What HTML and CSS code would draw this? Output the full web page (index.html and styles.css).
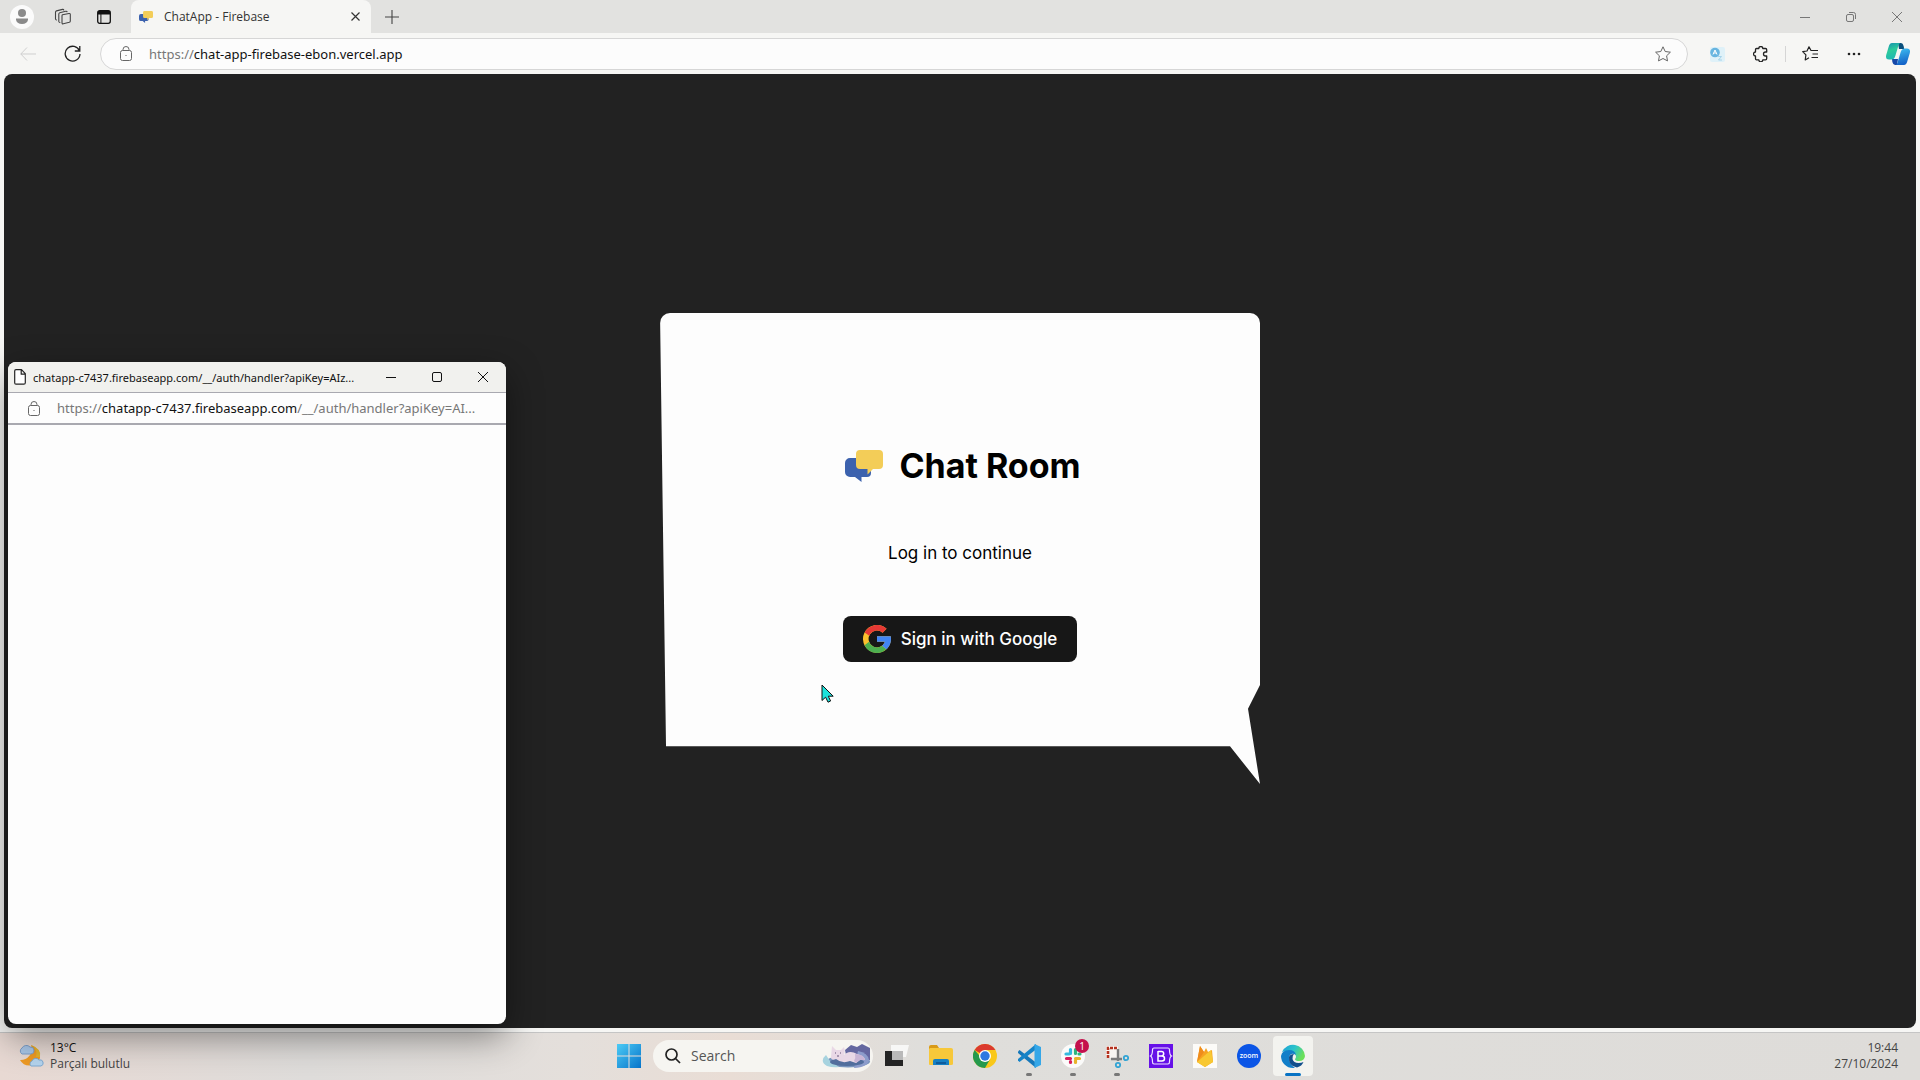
FILE: index.html
```html
<!DOCTYPE html>
<html lang="en">
<head>
<meta charset="utf-8">
<title>ChatApp - Firebase</title>
<link rel="stylesheet" href="styles.css">
</head>
<body>
<div class="desktop">
  <div class="browser">
    <header class="tabstrip">
      <div class="strip-tools">
        <button class="icon-btn avatar" aria-label="Profile"><svg width="24" height="24" viewBox="0 0 24 24"><circle cx="12" cy="12" r="12" fill="#fbfbfb"/><circle cx="12" cy="8" r="4" fill="#8a8a8a"/><path d="M6 13.500h12v1a6 4.500 0 0 1-12 0z" fill="#8a8a8a"/></svg></button>
        <button class="icon-btn" aria-label="Workspaces"><svg width="18" height="18" viewBox="0 0 18 18" fill="none" stroke="#444" stroke-width="1.100" stroke-linejoin="round"><path d="M8.500 6.800l6.500-1.300q1.300-.2 1.300 1V13q0 1-1 1.300l-6 1.500q-1.300.3-1.300-1V8q0-1 .5-1.200zM4.800 13.500V6q0-1 1-1.300l6-1.400q1.200-.2 1.400.9M4.800 13.500q.2 1.200 1.500 1M1.500 11V4.200q0-1 1-1.300l6-1.500q1.200-.2 1.400.9M1.500 11q.2 1.200 1.500 1"/></svg></button>
        <button class="icon-btn" aria-label="Tab actions"><svg width="14" height="14" viewBox="0 0 14 14"><rect x=".7" y=".7" width="12.600" height="12.600" rx="2" fill="none" stroke="#111" stroke-width="1.300"/><path d="M1 1h12v3.500H1zM3.400 4.500h1V13h-1z" fill="#111"/></svg></button>
      </div>
      <div class="tab">
        <svg class="tab-logo" width="14" height="12" viewBox="0 0 38 32"><use href="#chat-logo"/></svg>
        <span class="tab-title">ChatApp - Firebase</span>
        <button class="icon-btn small" aria-label="Close tab"><svg width="9" height="9" viewBox="0 0 9 9" stroke="#333" stroke-width="1.200"><path d="M.5.5l8 8M8.500.5l-8 8"/></svg></button>
      </div>
      <button class="icon-btn new-tab" aria-label="New tab"><svg width="14" height="14" viewBox="0 0 14 14" stroke="#444" stroke-width="1.100"><path d="M7 0v14M0 7h14"/></svg></button>
      <div class="window-tools">
        <button class="icon-btn" aria-label="Minimize"><svg width="10" height="10" viewBox="0 0 10 10" stroke="#777" fill="none"><path d="M0 5.500h10"/></svg></button>
        <button class="icon-btn" aria-label="Restore"><svg width="10" height="10" viewBox="0 0 10 10" stroke="#777" fill="none"><rect x=".5" y="2.500" width="7" height="7" rx="1.500"/><path d="M3 .5h4.500a2 2 0 0 1 2 2V7"/></svg></button>
        <button class="icon-btn" aria-label="Close"><svg width="10" height="10" viewBox="0 0 10 10" stroke="#777" fill="none"><path d="M0 0l10 10M10 0L0 10"/></svg></button>
      </div>
    </header>

    <div class="toolbar">
      <button class="icon-btn back" aria-label="Back"><svg width="16" height="14" viewBox="0 0 16 14" stroke="#cfcfcf" fill="none"><path d="M7 .5L.8 7 7 13.500M.8 7H16"/></svg></button>
      <button class="icon-btn" aria-label="Refresh"><svg width="17" height="17" viewBox="0 0 17 17" stroke="#222" stroke-width="1.300" fill="none"><path d="M15.500 6A7.400 7.400 0 1 0 16 9M15.800 1v5h-5"/></svg></button>
      <div class="address">
        <svg width="12" height="15" viewBox="0 0 12 15" stroke="#666" fill="none"><use href="#lock"/></svg>
        <p class="url"><span class="dim">https://</span>chat-app-firebase-ebon.vercel.app</p>
        <button class="icon-btn" aria-label="Favourite this page"><svg width="16" height="16" viewBox="0 0 16 16" stroke="#666" fill="none" stroke-linejoin="round"><path d="M8 .8l2.200 4.700 5.200.7-3.800 3.600.9 5.100L8 12.500l-4.500 2.400.9-5.100L.6 6.200l5.200-.7z"/></svg></button>
      </div>
      <div class="toolbar-tools">
        <button class="icon-btn" aria-label="Translate"><svg width="16" height="16" viewBox="0 0 16 16"><rect x="1" y="1" width="15" height="15" rx="2" fill="#dff1f8"/><circle cx="6" cy="6.500" r="4.800" fill="#68b5e0"/><path d="M4 8.500L6 4l2 4.500M4.700 7h2.600" stroke="#fff" fill="none"/><path d="M9 10.500h3.500L9.500 14H13" stroke="#a5d3ea" fill="none"/></svg></button>
        <button class="icon-btn" aria-label="Extensions"><svg width="16" height="16" viewBox="0 0 16 16" fill="none" stroke="#222" stroke-width="1.300" stroke-linejoin="round"><path d="M3.500 2.500h2.300a2 2 0 0 1 4 0h2.700q1.200 0 1.200 1.200v2.300h-1.200a2 2 0 0 0 0 4h1.200v2.600q0 1.200-1.200 1.200H9.800a2 2 0 0 1-4 0H3.500q-1 0-1-1V10a2 2 0 0 1 0-4V3.500q0-1 1-1z"/></svg></button>
        <span class="divider"></span>
        <button class="icon-btn" aria-label="Favourites"><svg width="16" height="15" viewBox="0 0 16 15" fill="none" stroke="#222" stroke-width="1.200" stroke-linejoin="round"><path d="M10 4.500H9L7 .8 5 5 .7 5.700l3.200 3.200L3.200 14 7 11.800M9.500 4.500H16M10.500 8H16M9.500 11.500H16"/></svg></button>
        <button class="icon-btn" aria-label="Settings and more"><svg width="14" height="4" viewBox="0 0 14 4" fill="#222"><circle cx="2" cy="2" r="1.300"/><circle cx="7" cy="2" r="1.300"/><circle cx="12" cy="2" r="1.300"/></svg></button>
        <button class="icon-btn" aria-label="Copilot"><svg width="24" height="22" viewBox="0 0 24 22"><defs><linearGradient id="cp1" x2=".3" y2="1"><stop stop-color="#168fb0"/><stop offset=".5" stop-color="#2ccb9b"/><stop offset="1" stop-color="#21b8b2"/></linearGradient><linearGradient id="cp2" x2=".2" y2="1"><stop stop-color="#3fc0f2"/><stop offset="1" stop-color="#1464c8"/></linearGradient></defs><path d="M12 0h3q2 0 2.600 3l.6 3H13z" fill="#0a4f7c"/><path d="M6 16h6l-1 6H9q-2 0-2.600-3z" fill="#1648a8"/><path d="M6 0h8.500Q13 0 12 4L9.300 13q-1 3.500-4 3.500H3Q-.8 16.500.2 12L2.600 4Q3.600 0 6 0z" fill="url(#cp1)"/><path d="M18 22H9.500q1.500 0 2.500-4l2.700-9q1-3.500 4-3.500H21q3.800 0 2.800 4.500L21.400 18q-1 4-3.400 4z" fill="url(#cp2)"/></svg></button>
      </div>
    </div>

    <main class="page">
      <section class="bubble">
        <h1 class="brand"><svg width="38" height="32" viewBox="0 0 38 32"><g id="chat-logo"><path d="M5 8h17a4 4 0 0 1 4 4v11a4 4 0 0 1-4 4h-5.500v5L10 27H5a5 5 0 0 1-5-5v-9a5 5 0 0 1 5-5z" fill="#3c62ae"/><path d="M15 0h19a4 4 0 0 1 4 4v11a4 4 0 0 1-4 4h-6l-5.500 5.500V19H15a4 4 0 0 1-4-4V4a4 4 0 0 1 4-4z" fill="#f3cd58"/></g></svg>Chat Room</h1>
        <p class="prompt">Log in to continue</p>
        <button class="google-btn"><svg width="28" height="28" viewBox="4 4 40 40"><path fill="#fbc02d" d="M43.600 20H24v8h11.300A12 12 0 1 1 32 15l5.700-5.700A20 20 0 1 0 43.600 20z"/><path fill="#e53935" d="M6.300 14.700l6.600 4.800A12 12 0 0 1 32 15l5.700-5.700A20 20 0 0 0 6.300 14.700z"/><path fill="#4caf50" d="M24 44c5.200 0 9.900-2 13.400-5.200l-6.200-5.200A12 12 0 0 1 12.700 28l-6.500 5A20 20 0 0 0 24 44z"/><path fill="#4285f4" d="M43.600 20H24v8h11.300a12 12 0 0 1-4.100 5.600l6.200 5.200C37 39.200 44 34 44 24q0-2-.4-4z"/></svg>Sign in with Google</button>
      </section>
    </main>
  </div>

  <footer class="taskbar">
    <div class="weather">
      <svg width="26" height="24" viewBox="0 0 26 24"><path d="M13 1a11 11 0 0 1-11 15 11 11 0 0 0 20-2Q23 5 13 1z" fill="#ee9a24"/><path d="M13 1q7 5 5 12h4q2-8-9-12z" fill="#e5b32b"/><path d="M4 10a3.500 3.500 0 0 1 0-6 5 5 0 0 1 8-1 3.500 3.500 0 0 1 1 7z" fill="#a9c7e8" stroke="#7d9fc9"/><path d="M13 22a3 3 0 0 1 1-5 4 4 0 0 1 7-1 3 3 0 0 1 2 6z" fill="#b5d4ee" stroke="#7faad2"/></svg>
      <p class="weather-text"><span class="temp">13°C</span><span>Parçalı bulutlu</span></p>
    </div>
    <div class="apps">
      <button class="app" aria-label="Start"><svg width="24" height="24" viewBox="0 0 24 24"><defs><linearGradient id="win" x2="1" y2="1"><stop stop-color="#4ccbf5"/><stop offset="1" stop-color="#0673ca"/></linearGradient></defs><path d="M0 0h11.500v11.500H0zM12.500 0H24v11.500H12.500zM0 12.500h11.500V24H0zM12.500 12.500H24V24H12.500z" fill="url(#win)"/></svg></button>
      <label class="search">
        <svg width="16" height="16" viewBox="0 0 16 16" fill="none" stroke="#222" stroke-width="1.700"><circle cx="6.500" cy="6.500" r="5.500"/><path d="M10.500 10.500L15 15"/></svg>
        <input type="text" placeholder="Search" aria-label="Search">
        <svg width="50" height="26" viewBox="0 0 50 26"><path d="M24 7l6-5 6 2 5-3 8 4v12H26z" fill="#6467a0"/><ellipse cx="27" cy="18.500" rx="22" ry="6" fill="#7894bd"/><path d="M5 12q-7 6 1 11 6 2 12 1L9 18z" fill="#a7d3df"/><path d="M37 8q10 2 11 9-1 7-15 8z" fill="#8c9ccb"/><ellipse cx="26" cy="19" rx="17" ry="4" fill="#526e9d"/><path d="M10 14L11 3l4 4h5l3-3q2 6-1 9 6-7 14-2 8 2 8 6l-5 0-4 3-6-2q-8 3-14-2-5 2-5-2z" fill="#e9d8e6"/><path d="M34 11q9 0 10 6h-5l-4 3-2-2q2-3 1-7z" fill="#c9b5d5"/><path d="M14 10h1M19 10h1M16 13h2" stroke="#67547b"/></svg>
      </label>
      <button class="app" aria-label="Task view"><svg width="24" height="24" viewBox="0 0 24 24"><path d="M6 1h18l-3 12H6z" fill="#f7f7f6"/><path d="M0 7h18v15H0z" fill="#242424"/><path d="M7 7h11v9H7z" fill="#b9b9b9"/></svg></button>
      <button class="app" aria-label="File Explorer"><svg width="24" height="24" viewBox="0 0 24 24"><path d="M0 3q0-2 2-2h6l2 3h-1v5H0z" fill="#d99a18"/><path d="M1 4h21q2 0 2 2v14q0 1-2 1H1q-1 0-1-1V5z" fill="#f7c83a"/><path d="M4 21v-4q0-2 2-2h12q2 0 2 2v4z" fill="#1680c4"/><path d="M7 18h10v2H7z" fill="#0d5c9d"/></svg></button>
      <button class="app" aria-label="Chrome"><svg width="24" height="24" viewBox="0 0 24 24"><circle cx="12" cy="12" r="12" fill="#f9c81a"/><path d="M12 12L1.600 6A12 12 0 0 1 22.400 6H12z" fill="#db3a2e"/><path d="M1.600 6A12 12 0 0 0 12 24l5.200-9L12 18z" fill="#25994d"/><circle cx="12" cy="12" r="6" fill="#fff"/><circle cx="12" cy="12" r="4.700" fill="#2f78e0"/></svg></button>
      <button class="app running" aria-label="Visual Studio Code"><svg width="24" height="24" viewBox="0 0 24 24"><path d="M1 7.500L2.500 6 19 18.500V24L1 9z" fill="#1678ba"/><path d="M1 16.500L2.500 18 19 5.500V0L1 15z" fill="#1684c8"/><path d="M17.500 0L24 3v18l-6.500 3z" fill="#35a7e8"/></svg></button>
      <button class="app running" aria-label="Slack"><svg width="24" height="24" viewBox="0 0 24 24" stroke-width="3.200" stroke-linecap="round"><circle cx="12" cy="12" r="12" fill="#fbfbfa"/><path d="M9.500 5.500v4M5 10h3" stroke="#36b9df"/><path d="M14.500 5.500v4M19 10h-1" stroke="#2eb67d"/><path d="M5.500 14.500h4M9.500 18.500v-1" stroke="#d81e5b"/><path d="M14.500 14.500h4M14.500 18.500v-2" stroke="#e8b32b"/></svg><span class="badge">1</span></button>
      <button class="app running" aria-label="Snipping Tool"><svg width="24" height="24" viewBox="0 0 24 24" fill="none"><rect x="1" y="2" width="12" height="12" rx="1" fill="#f8f5f2"/><path d="M3 14V4h10" stroke="#b5321f" stroke-width="2.600" stroke-dasharray="3 1"/><path d="M13 5v12M6 15h11" stroke="#7c7c7c" stroke-width="2.400"/><circle cx="21" cy="14" r="2.200" stroke="#31a4d4" stroke-width="1.800"/><circle cx="13" cy="21" r="2.200" stroke="#31a4d4" stroke-width="1.800"/></svg></button>
      <button class="app" aria-label="Bootstrap"><svg width="24" height="24" viewBox="0 0 24 24"><path d="M0 0h24v24H0z" fill="#6610e8"/><path d="M5 4h14q1.500 0 1.500 2 0 5 2 6-2 1-2 6 0 2-1.500 2H5q-1.500 0-1.500-2 0-5-2-6 2-1 2-6 0-2 1.500-2z" fill="#6610e8" stroke="#ede2ff" stroke-width="1.200"/><path d="M9 7.500h3.500a2.200 2.200 0 0 1 0 4.400H9m0 0h4a2.500 2.500 0 0 1 0 5H9zM9 7v10" fill="none" stroke="#fff" stroke-width="1.500"/></svg></button>
      <button class="app" aria-label="Firebase"><svg width="24" height="24" viewBox="0 0 24 24"><path d="M0 0h24v24H0z" fill="#fcfbf8"/><path d="M4 18L7 2l4 6 2-4 2 4 4-2 1 12-8 5z" fill="#f6a321"/><path d="M4 18L7 2l4 6z" fill="#ef8c1c"/><path d="M4 18L18 6l2 12-8 5z" fill="#f8c832"/></svg></button>
      <button class="app" aria-label="Zoom"><svg width="24" height="24" viewBox="0 0 24 24"><circle cx="12" cy="12" r="12" fill="#0b55e6"/><text x="12" y="14" text-anchor="middle" class="zoom-word">zoom</text></svg></button>
      <button class="app active" aria-label="Microsoft Edge"><svg width="24" height="24" viewBox="0 0 24 24"><defs><linearGradient id="ed" x2="1" y2=".4"><stop stop-color="#1c9fd8"/><stop offset=".55" stop-color="#2cc4ca"/><stop offset="1" stop-color="#6be05a"/></linearGradient></defs><path d="M1 8A12 12 0 0 1 24 12q-.5 5-6 5-4 0-4-2 2-2 0-5-3-4-8-3-3 0-5 1z" fill="url(#ed)"/><path d="M0 12Q1 6 8 6q6 0 7 5l-2-1Q9 9 8 14q0 6 6 10h-2A12 12 0 0 1 0 12z" fill="#127fc9"/><path d="M8 13q-1 9 8 10.500Q21 22 22.500 18q-2 1-5 1-5 0-6-4-.5-3 1.500-5-4 0-5 3z" fill="#124f8c"/></svg></button>
    </div>
    <p class="clock"><time>19:44</time><time>27/10/2024</time></p>
  </footer>

  <aside class="popup">
    <div class="popup-title">
      <svg width="12" height="16" viewBox="0 0 12 16" fill="#fff" stroke="#222" stroke-width="1.200" stroke-linejoin="round"><path d="M2 .7h5.500l3.800 4v9q0 1.500-1.500 1.500H2Q.7 15.200.7 13.700V2Q.7.7 2 .7zM7.200.7v4.500h4"/></svg>
      <p class="popup-name">chatapp-c7437.firebaseapp.com/__/auth/handler?apiKey=AIz...</p>
      <button class="icon-btn" aria-label="Minimize popup"><svg width="10" height="10" viewBox="0 0 10 10" stroke="#111" fill="none"><path d="M0 5.500h10"/></svg></button>
      <button class="icon-btn" aria-label="Maximize popup"><svg width="10" height="10" viewBox="0 0 10 10" stroke="#111" fill="none"><rect x=".5" y=".5" width="9" height="9" rx="1.500"/></svg></button>
      <button class="icon-btn" aria-label="Close popup"><svg width="10" height="10" viewBox="0 0 10 10" stroke="#111" fill="none"><path d="M0 0l10 10M10 0L0 10"/></svg></button>
    </div>
    <div class="popup-address">
      <svg width="12" height="15" viewBox="0 0 12 15" stroke="#666" fill="none"><g id="lock"><rect x=".5" y="4.500" width="11" height="10" rx="2"/><path d="M3 4.500V3.500a3 3 0 0 1 6 0v1M5.500 9.500h1"/></g></svg>
      <p class="url"><span class="dim">https://</span>chatapp-c7437.firebaseapp.com<span class="dim">/__/auth/handler?apiKey=AI...</span></p>
    </div>
  </aside>

  <svg class="cursor" width="13" height="19" viewBox="0 0 13 19"><path d="M1 1v15.500l3.600-3.300 2.400 5 2.600-1.200-2.300-4.800h4.900z" fill="#1de3dc" stroke="#111"/></svg>
</div>
</body>
</html>
```
FILE: styles.css
```css
* { box-sizing: border-box; }
body { margin: 0; font-family: "Open Sans", "Noto Sans", sans-serif; font-size: 12px; color: #111; }
h1, p { margin: 0; }
button { font: inherit; padding: 0; border: 0; background: none; color: inherit; }
svg { display: block; flex: none; }

.desktop { position: relative; height: 100vh; display: flex; flex-direction: column; overflow: hidden; }
.browser { flex: 1; min-height: 0; display: flex; flex-direction: column; background: #f6f6f4; }

.icon-btn { width: 24px; height: 24px; display: flex; align-items: center; justify-content: center; flex: none; }
.icon-btn.small { width: 16px; height: 16px; }

.tabstrip { height: 33px; display: flex; align-items: center; background: #e2e2e0; }
.strip-tools { width: 131px; display: flex; gap: 17px; padding-left: 10px; }
.tab { width: 240px; height: 33px; display: flex; align-items: center; gap: 11px; padding: 0 8px; background: #f6f6f4; border-radius: 8px 8px 0 0; }
.tab-title { flex: 1; color: #333; }
.new-tab { margin-left: 9px; }
.window-tools { margin-left: auto; display: flex; gap: 22px; padding-right: 11px; }

.toolbar { height: 41px; display: flex; align-items: center; padding: 0 10px 0 16px; }
.back { margin-right: 20px; }
.address { flex: 1; height: 32px; display: flex; align-items: center; gap: 17px; margin-left: 16px; padding: 0 12px 0 19px; background: #fcfcfc; border: 1px solid #d6d6d6; border-radius: 16px; }
.url { flex: 1; font-family: "Noto Sans", sans-serif; font-size: 13px; white-space: nowrap; }
.dim { color: #777; }
.toolbar-tools { display: flex; align-items: center; gap: 20px; margin-left: 17px; }
.divider { width: 1px; height: 16px; margin: 0 -8px; background: #d5d5d5; }

.page { flex: 1; margin: 0 4px 4px; display: flex; align-items: center; justify-content: center; padding-bottom: 5px; background: #222; border-radius: 8px; }
.bubble { width: 600px; height: 471px; display: flex; flex-direction: column; align-items: center; justify-content: center; gap: 51px; padding-top: 6px; background: #fdfdfd; border-radius: 10px 10px 0 0; clip-path: polygon(0 0, 100% 0, 100% 79%, 98% 84%, 100% 100%, 95% 92%, 1% 92%); font-family: Inter, "Open Sans", sans-serif; color: #000; }
.brand { display: flex; align-items: center; gap: 16px; padding-left: 6px; font-size: 34px; line-height: 48px; font-weight: 700; }
.prompt { font-size: 17px; line-height: 24px; }
.google-btn { height: 46px; display: flex; align-items: center; gap: 10px; padding: 0 20px; border-radius: 8px; background: #171717; color: #fff; font-size: 17px; font-weight: 500; }

.taskbar { height: 48px; display: grid; grid-template-columns: 1fr auto 1fr; align-items: center; padding: 0 22px 2px 18px; border-top: 1px solid #c5c5c5; background: linear-gradient(90deg, #e8d9d3, #dedcda 16%, #e4dfdb 30%, #e9ddd5 38%, #dfdedb 48%, #dedcd9); color: #444; }
.weather { display: flex; align-items: center; gap: 6px; }
.weather-text, .clock { display: flex; flex-direction: column; line-height: 16px; }
.temp { color: #111; }
.clock { text-align: right; }
.apps { display: flex; align-items: center; gap: 4px; margin-left: 6px; }
.app { position: relative; width: 40px; height: 40px; display: flex; align-items: center; justify-content: center; border-radius: 4px; }
.search { width: 220px; height: 32px; display: flex; align-items: center; gap: 10px; padding: 0 2px 0 12px; border-radius: 16px; background: #f6f5f1; }
.search input { flex: 1; min-width: 0; padding: 0; border: 0; background: none; font: inherit; font-size: 14px; outline: 0; }
.search input::placeholder { color: #555; opacity: 1; }
.running::after, .active::after { content: ""; position: absolute; left: 50%; bottom: 0; width: 6px; height: 3px; margin-left: -3px; border-radius: 2px; background: #777; }
.active { background: #f3f3ef; }
.active::after { width: 16px; margin-left: -8px; background: #0873c4; }
.badge { position: absolute; right: 4px; top: 3px; width: 14px; height: 14px; border-radius: 7px; background: #c4104c; color: #fff; font-size: 10px; line-height: 14px; text-align: center; }
.zoom-word { font-family: "Open Sans", sans-serif; font-size: 7px; font-weight: 600; fill: #fff; }

.popup { position: absolute; left: 8px; top: 362px; width: 498px; height: 662px; overflow: hidden; border-radius: 8px; background: #fdfdfd; box-shadow: 0 12px 36px rgba(0, 0, 0, .45); }
.popup-title { height: 30px; display: flex; align-items: center; gap: 7px; padding: 0 11px 0 6px; background: #f1f1ee; }
.popup-title .icon-btn { margin-left: 15px; }
.popup-name { flex: 1; min-width: 0; font-family: "Noto Sans", sans-serif; font-size: 11px; white-space: nowrap; }
.popup-address { height: 33px; display: flex; align-items: center; gap: 17px; padding: 0 20px; border: solid #a9a9b0; border-width: 1px 0 2px; }

.cursor { position: absolute; left: 821px; top: 684px; }
```
